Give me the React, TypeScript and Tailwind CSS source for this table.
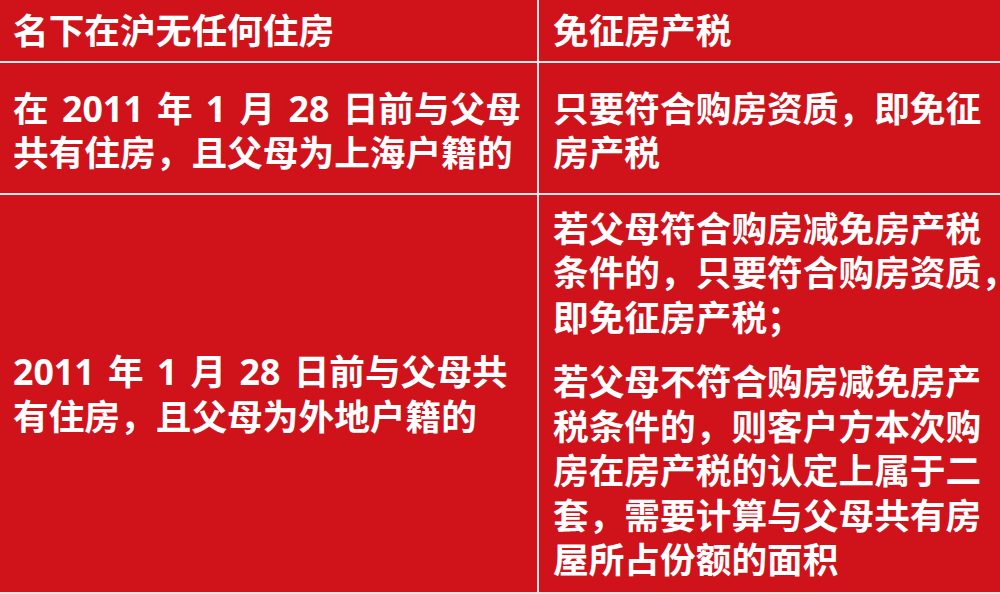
import React from 'react'

const FONT = '"Noto Sans", "Noto Sans CJK SC", sans-serif'

function Lines({ lines }: { lines: React.ReactNode[] }) {
  return (
    <div>
      {lines.map((l, i) => (
        <div key={i} className="whitespace-nowrap">{l}</div>
      ))}
    </div>
  )
}

export default function App() {
  return (
    <div
      className="w-[1000px] h-[594px] bg-[#f3e6e6] text-white font-bold text-[35.7px] leading-[44.5px] overflow-hidden"
      style={{ fontFamily: FONT }}
    >
      <div className="grid grid-cols-[537px_1fr] grid-rows-[61px_130px_397px] gap-[2px] [word-spacing:4px]">
        {/* header */}
        <div className="bg-[#d0121b] flex items-center pl-[13px]">名下在沪无任何住房</div>
        <div className="bg-[#d0121b] flex items-center pl-[14px]">免征房产税</div>

        {/* row 1 */}
        <div className="bg-[#d0121b] flex items-center pl-[13px] pt-[4px]">
          <Lines lines={['在 2011 年 1 月 28 日前与父母', '共有住房，且父母为上海户籍的']} />
        </div>
        <div className="bg-[#d0121b] flex items-center pl-[14px] pt-[4px]">
          <Lines lines={['只要符合购房资质，即免征', '房产税']} />
        </div>

        {/* row 2 */}
        <div className="bg-[#d0121b] flex items-center pl-[13px]">
          <Lines lines={['2011 年 1 月 28 日前与父母共', '有住房，且父母为外地户籍的']} />
        </div>
        <div className="bg-[#d0121b] flex flex-col justify-center gap-[20px] pl-[14px]">
          <Lines
            lines={[
              '若父母符合购房减免房产税',
              <>条件的，只要符合购房资质<span className="inline-block w-[0.4em]">，</span></>,
              '即免征房产税；',
            ]}
          />
          <Lines
            lines={[
              '若父母不符合购房减免房产',
              '税条件的，则客户方本次购',
              '房在房产税的认定上属于二',
              '套，需要计算与父母共有房',
              '屋所占份额的面积',
            ]}
          />
        </div>
      </div>
    </div>
  )
}
